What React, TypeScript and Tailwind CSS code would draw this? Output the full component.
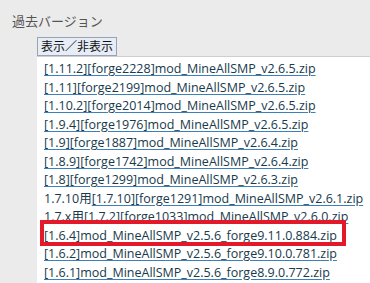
const rows: { pre?: string; link: string }[] = [
  { link: '[1.11.2][forge2228]mod_MineAllSMP_v2.6.5.zip' },
  { link: '[1.11][forge2199]mod_MineAllSMP_v2.6.5.zip' },
  { link: '[1.10.2][forge2014]mod_MineAllSMP_v2.6.5.zip' },
  { link: '[1.9.4][forge1976]mod_MineAllSMP_v2.6.5.zip' },
  { link: '[1.9][forge1887]mod_MineAllSMP_v2.6.4.zip' },
  { link: '[1.8.9][forge1742]mod_MineAllSMP_v2.6.4.zip' },
  { link: '[1.8][forge1299]mod_MineAllSMP_v2.6.3.zip' },
  { pre: '1.7.10用', link: '[1.7.10][forge1291]mod_MineAllSMP_v2.6.1.zip' },
  { pre: '1.7.x用', link: '[1.7.2][forge1033]mod_MineAllSMP_v2.6.0.zip' },
  { link: '[1.6.4]mod_MineAllSMP_v2.5.6_forge9.11.0.884.zip' },
  { link: '[1.6.2]mod_MineAllSMP_v2.5.6_forge9.10.0.781.zip' },
  { link: '[1.6.1]mod_MineAllSMP_v2.5.6_forge8.9.0.772.zip' },
  { link: '[1.5.2]mod_MineAllSMP_v2.5.4_forge7.8.1.737.zip' },
]

export default function App() {
  return (
    <div
      className="relative h-[283px] w-[370px] overflow-hidden bg-[#ebebeb]"
      style={{ fontFamily: '"Open Sans", "Noto Sans CJK JP", sans-serif' }}
    >
      <div className="pl-[12px] pt-[11px] text-[13px] leading-[20px] text-[#555]">過去バージョン</div>
      <div className="flex pl-[37px] pt-[6px]">
        <button className="h-[19px] border border-[#9aa3b3] bg-[#e6edf7] px-[3px] text-[12px] leading-[17px] text-[#111]">
          表示／非表示
        </button>
      </div>
      <div className="ml-[37px] border-t border-[#cfcfcf] bg-white pl-[7px] pt-[3px] text-[12.5px] leading-[18.5px] text-[#173a4c]">
        {rows.map(r => (
          <div key={r.link} className="whitespace-nowrap">
            {r.pre}
            <span className="underline decoration-[#3d7fb8] underline-offset-[2px]">{r.link}</span>
          </div>
        ))}
      </div>
      <div className="absolute left-[40px] top-[220px] h-[26px] w-[306px] border-[4px] border-[#e2182b]" />
    </div>
  )
}
